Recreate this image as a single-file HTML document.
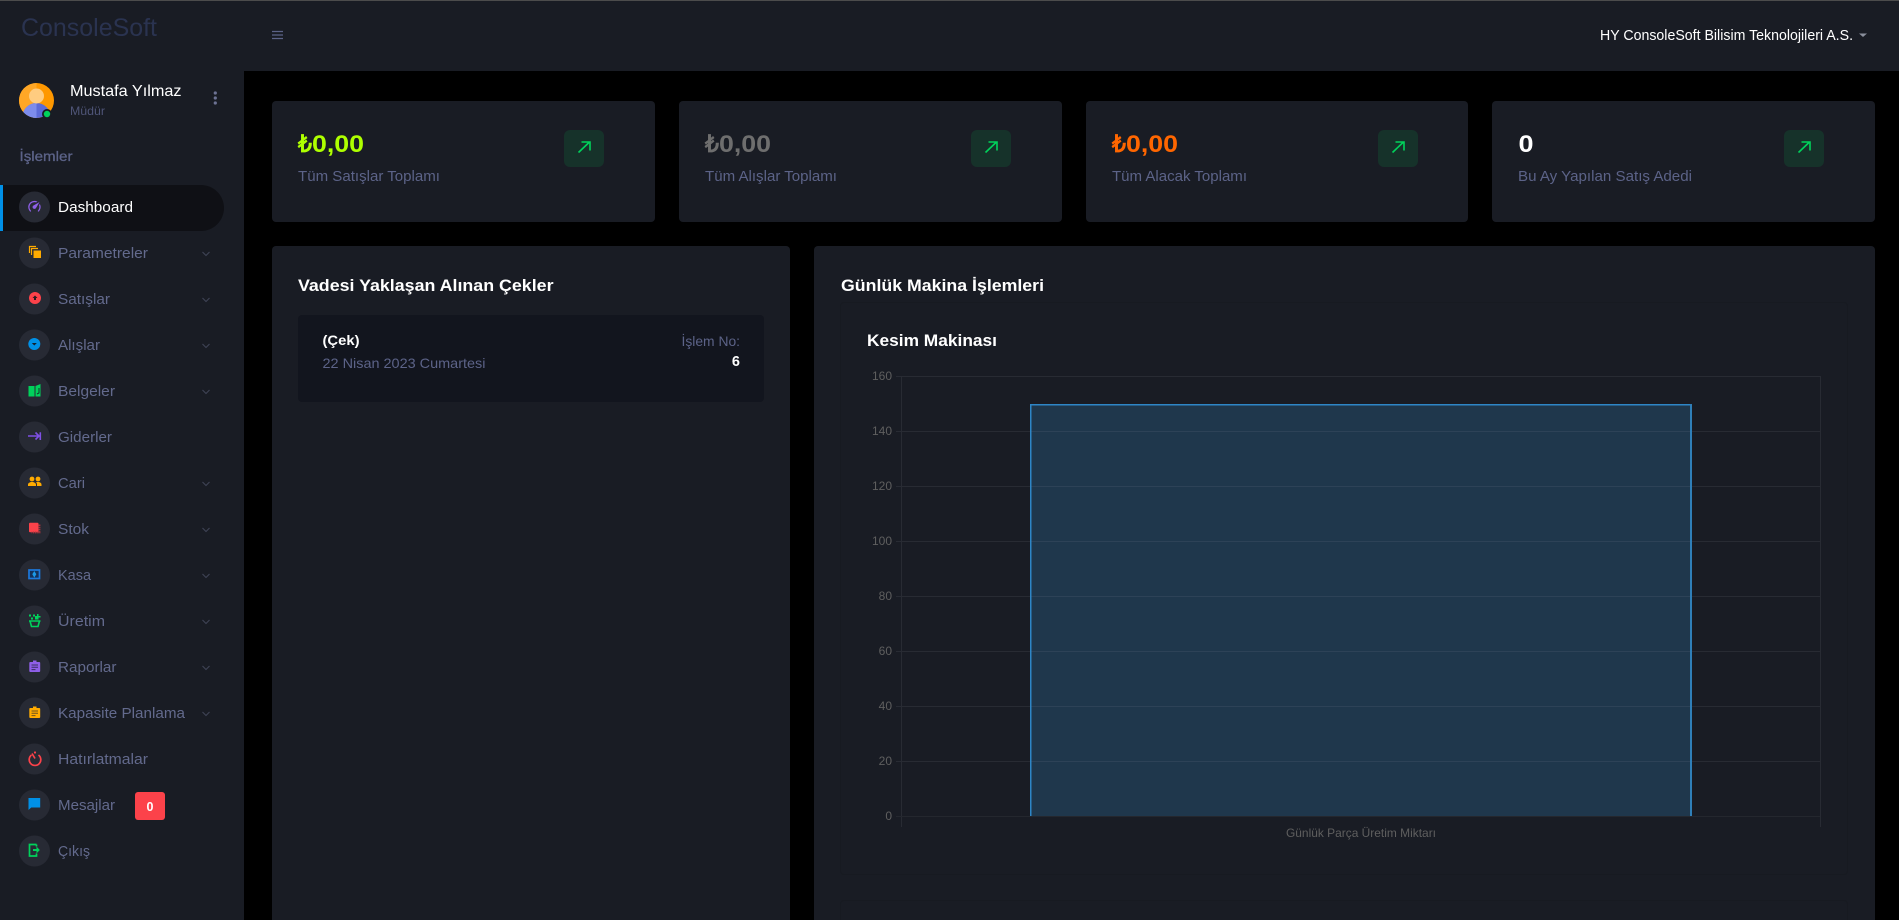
<!DOCTYPE html>
<html lang="tr">
<head>
<meta charset="utf-8">
<title>ConsoleSoft Dashboard</title>
<style>
html,body{margin:0;padding:0;width:1899px;height:920px;overflow:hidden;background:#000}
div{position:absolute;box-sizing:border-box}
#root{left:0;top:0;width:1899px;height:920px;overflow:hidden;background:#000}
.c{background:#191c24;border-radius:4px}
svg{position:absolute;left:0;top:0}
text{font-family:"Liberation Sans",sans-serif}
.m{font-size:15px;fill:#636a8d}
.l{font-size:14.5px;fill:#5c6388}
.t{font-size:16.5px;font-weight:700;fill:#fff}
.v{font-size:24px;font-weight:700}
.a{font-size:12px;fill:#5f5f5f;text-anchor:end}
</style>
</head>
<body>
<div id="root">
<div style="left:0;top:0;width:1899px;height:71px;background:#191c24"></div>
<div style="left:0;top:0;width:244px;height:920px;background:#191c24"></div>
<div style="left:0;top:0;width:1899px;height:1px;background:#4c4c4c"></div>
<div style="left:0;top:185px;width:224px;height:46px;background:#0f1015;border-radius:0 23px 23px 0"></div>
<div style="left:0;top:185px;width:3px;height:46px;background:#0090e7"></div>

<div class="c" style="left:272px;top:101px;width:383px;height:121px"></div>
<div class="c" style="left:679px;top:101px;width:383px;height:121px"></div>
<div class="c" style="left:1086px;top:101px;width:382px;height:121px"></div>
<div class="c" style="left:1492px;top:101px;width:383px;height:121px"></div>
<div class="c" style="left:272px;top:246px;width:518px;height:700px"></div>
<div class="c" style="left:814px;top:246px;width:1061px;height:700px"></div>
<div style="left:298px;top:315px;width:466px;height:87px;background:#12151e;border-radius:4px"></div>
<div style="left:840px;top:302px;width:1008px;height:573px;border:1px solid #171a21;border-radius:4px"></div>
<div style="left:840px;top:900px;width:1008px;height:60px;border:1px solid #171a21;border-radius:4px"></div>

<svg width="1899" height="920" viewBox="0 0 1899 920" xmlns="http://www.w3.org/2000/svg">
  <!-- header -->
  <text x="21" y="36" font-size="25" fill="#2a3350" textLength="136" lengthAdjust="spacingAndGlyphs">ConsoleSoft</text>
  <path d="M272 31.5h11M272 35h11M272 38.500h11" stroke="#5c6388" stroke-width="1.200"/>
  <text x="1600" y="40" font-size="14.500" fill="#fff" textLength="253" lengthAdjust="spacingAndGlyphs">HY ConsoleSoft Bilisim Teknolojileri A.S.</text>
  <path d="M1859 33.500h8l-4 3.500z" fill="#8a8f9c"/>

  <!-- profile -->
  <defs><clipPath id="av"><circle cx="36.500" cy="100.500" r="17.500"/></clipPath></defs>
  <circle cx="36.500" cy="100.500" r="17.500" fill="#ff9800"/>
  <path d="M36.500 83a17.500 17.500 0 0 0 0 35z" fill="#ffa726"/>
  <g clip-path="url(#av)">
    <path d="M22 119c0-10 7-16 14.500-16s14.500 6 14.500 16z" fill="#5c6bd8"/>
    <path d="M22 119c0-10 7-16 14.500-16v16z" fill="#7d8cec"/>
  </g>
  <circle cx="36.500" cy="96" r="7.500" fill="#ffcc80"/>
  <circle cx="47" cy="114" r="5" fill="#191c24"/>
  <circle cx="47" cy="114" r="3.200" fill="#00d25b"/>
  <text x="70" y="96" font-size="16" fill="#fff" textLength="111.500" lengthAdjust="spacingAndGlyphs">Mustafa Yılmaz</text>
  <text x="70" y="115" font-size="12" fill="#4f5578" textLength="35" lengthAdjust="spacingAndGlyphs">Müdür</text>
  <g fill="#6c7293"><circle cx="215.300" cy="93" r="1.600"/><circle cx="215.300" cy="98" r="1.600"/><circle cx="215.300" cy="103" r="1.600"/></g>
  <text x="19.500" y="161" font-size="14" fill="#5c6388" stroke="#5c6388" stroke-width=".3" textLength="53" lengthAdjust="spacingAndGlyphs">İşlemler</text>

  <!-- icon circles -->
  <g fill="#272a34">
    <circle cx="34.500" cy="207" r="15.500"/><circle cx="34.500" cy="253" r="15.500"/><circle cx="34.500" cy="299" r="15.500"/>
    <circle cx="34.500" cy="345" r="15.500"/><circle cx="34.500" cy="391" r="15.500"/><circle cx="34.500" cy="437" r="15.500"/>
    <circle cx="34.500" cy="483" r="15.500"/><circle cx="34.500" cy="529" r="15.500"/><circle cx="34.500" cy="575" r="15.500"/>
    <circle cx="34.500" cy="621" r="15.500"/><circle cx="34.500" cy="667" r="15.500"/><circle cx="34.500" cy="713" r="15.500"/>
    <circle cx="34.500" cy="759" r="15.500"/><circle cx="34.500" cy="805" r="15.500"/><circle cx="34.500" cy="851" r="15.500"/>
  </g>

  <!-- icons -->
  <path transform="translate(27,199) scale(.62)" fill="#8f5fe8" d="M12,16A3,3 0 0,1 9,13C9,11.88 9.61,10.9 10.5,10.39L20.21,4.77L14.68,14.35C14.18,15.33 13.17,16 12,16M12,3C13.81,3 15.5,3.5 16.97,4.32L14.87,5.53C14,5.19 13,5 12,5A8,8 0 0,0 4,13C4,15.21 4.89,17.21 6.34,18.65H6.35C6.74,19.04 6.74,19.67 6.35,20.06C5.96,20.45 5.32,20.45 4.93,20.07V20.07C3.12,18.26 2,15.76 2,13A10,10 0 0,1 12,3M22,13C22,15.76 20.88,18.26 19.07,20.07V20.07C18.68,20.45 18.05,20.45 17.66,20.06C17.27,19.67 17.27,19.04 17.66,18.65V18.65C19.11,17.2 20,15.21 20,13C20,12 19.81,11 19.46,10.1L20.67,8C21.5,9.5 22,11.18 22,13Z"/>
  <g>
    <path d="M29.500 253v-6.500h6.500M31.500 255v-6.500h6.500" fill="none" stroke="#ffab00" stroke-width="1.200"/>
    <rect x="33.500" y="250.500" width="7.500" height="7.500" fill="#ffab00"/>
  </g>
  <circle cx="35" cy="298" r="6" fill="#fc424a"/><path d="M35 295.500l2.500 2.500h-1.500v2h-2v-2h-1.500z" fill="#2a1a20"/>
  <circle cx="34.300" cy="344" r="6" fill="#0090e7"/><path d="M31.800 343h5l-2.500 2.500z" fill="#12202c"/>
  <path d="M28.500 386h6v10.500h-6zM35.500 386l5-2v12.500h-5z" fill="#00d25b"/><path d="M37 394l2-1v-5" fill="none" stroke="#12352a" stroke-width="1"/>
  <path d="M28 436h11M35.500 432.500l3.500 3.500-3.500 3.500M40.300 432.300v7.700" fill="none" stroke="#7f50e4" stroke-width="1.600"/>
  <g fill="#ffab00">
    <circle cx="32" cy="479" r="2.400"/><circle cx="38" cy="479" r="2.400"/>
    <path d="M28 486v-1.500c0-1.500 2-2.500 4-2.500s4 1 4 2.500v1.500zM37 486v-1.500c0-1-.4-1.800-1-2.400.7-.1 1.300-.1 2-.1 2 0 3.500 1 3.500 2.500v1.500z"/>
  </g>
  <rect x="29" y="522.700" width="9.500" height="9.500" rx="1" fill="#fc424a"/><path d="M39.500 524.500v8h-8" fill="none" stroke="#a8343d" stroke-width="1.800" stroke-dasharray="1.500 .7"/>
  <rect x="29" y="570" width="10.500" height="8.500" fill="#14315a" stroke="#1c78dc" stroke-width="1.700"/><path d="M34.300 571l2 3.300-2 3.300-2-3.300z" fill="#1c9ae8"/>
  <g fill="#00d25b">
    <rect x="29" y="614.500" width="2" height="2"/><rect x="33" y="614.500" width="2" height="2"/><rect x="31" y="617.500" width="2" height="2"/><rect x="35" y="617.500" width="2" height="2"/>
    <path d="M37 614h1.500v2h2v1.500h-2v2h-1.500v-2h-2v-1.500h2z"/>
  </g>
  <path d="M29 621h11.500M30 621l1.500 5.500h6.500l1.500-5.500" fill="none" stroke="#00d25b" stroke-width="1.600"/>
  <path d="M30.300 662h2.700v-1.500h3.500v1.500h2.700c.6 0 1 .4 1 1v8c0 .6-.4 1-1 1h-8.900c-.6 0-1-.4-1-1v-8c0-.6.4-1 1-1z" fill="#8f5fe8"/>
  <path d="M31.500 665h6.500M31.500 667.300h6.500M31.500 669.600h4" stroke="#3a2c64" stroke-width="1"/>
  <path d="M30.300 708h2.700v-1.500h3.500v1.500h2.700c.6 0 1 .4 1 1v8c0 .6-.4 1-1 1h-8.900c-.6 0-1-.4-1-1v-8c0-.6.4-1 1-1z" fill="#ffab00"/>
  <path d="M31.500 711h6.500M31.500 713.300h6.500M31.500 715.600h4" stroke="#6a5020" stroke-width="1"/>
  <path d="M31.500 755a5.800 5.800 0 1 0 7 0" fill="none" stroke="#fc424a" stroke-width="1.700"/>
  <path d="M32 753.500l3 5" stroke="#fc424a" stroke-width="1.700"/><circle cx="35" cy="752.500" r="1.100" fill="#fc424a"/>
  <path d="M28.500 798h11.700v9.500h-9l-2.700 2.500z" fill="#0090e7"/>
  <path d="M36.500 844.500h-7v11.500h7v-2.500M36.500 846.500v-2" fill="none" stroke="#00d25b" stroke-width="1.700"/>
  <path d="M33 849h3.500v-2.500l3.300 3.500-3.300 3.500v-2.500h-3.500z" fill="#00d25b"/>

  <!-- menu text -->
  <text x="58" y="212" font-size="15" fill="#fff" textLength="75" lengthAdjust="spacingAndGlyphs">Dashboard</text>
  <text class="m" x="58" y="258" textLength="90" lengthAdjust="spacingAndGlyphs">Parametreler</text>
  <text class="m" x="58" y="304" textLength="52" lengthAdjust="spacingAndGlyphs">Satışlar</text>
  <text class="m" x="58" y="350" textLength="42" lengthAdjust="spacingAndGlyphs">Alışlar</text>
  <text class="m" x="58" y="396" textLength="57" lengthAdjust="spacingAndGlyphs">Belgeler</text>
  <text class="m" x="58" y="442" textLength="54" lengthAdjust="spacingAndGlyphs">Giderler</text>
  <text class="m" x="58" y="488" textLength="27" lengthAdjust="spacingAndGlyphs">Cari</text>
  <text class="m" x="58" y="534" textLength="31" lengthAdjust="spacingAndGlyphs">Stok</text>
  <text class="m" x="58" y="580" textLength="33" lengthAdjust="spacingAndGlyphs">Kasa</text>
  <text class="m" x="58" y="626" textLength="47" lengthAdjust="spacingAndGlyphs">Üretim</text>
  <text class="m" x="58" y="672" textLength="58.500" lengthAdjust="spacingAndGlyphs">Raporlar</text>
  <text class="m" x="58" y="718" textLength="127" lengthAdjust="spacingAndGlyphs">Kapasite Planlama</text>
  <text class="m" x="58" y="764" textLength="90" lengthAdjust="spacingAndGlyphs">Hatırlatmalar</text>
  <text class="m" x="58" y="810" textLength="57" lengthAdjust="spacingAndGlyphs">Mesajlar</text>
  <text class="m" x="58" y="856" textLength="32" lengthAdjust="spacingAndGlyphs">Çıkış</text>

  <!-- chevrons -->
  <g fill="none" stroke="#3f4456" stroke-width="1.100">
    <path d="M202.500 252l3.500 3.500 3.500-3.500"/><path d="M202.500 298l3.500 3.500 3.500-3.500"/><path d="M202.500 344l3.500 3.500 3.500-3.500"/>
    <path d="M202.500 390l3.500 3.500 3.500-3.500"/><path d="M202.500 482l3.500 3.500 3.500-3.500"/><path d="M202.500 528l3.500 3.500 3.500-3.500"/>
    <path d="M202.500 574l3.500 3.500 3.500-3.500"/><path d="M202.500 620l3.500 3.500 3.500-3.500"/><path d="M202.500 666l3.500 3.500 3.500-3.500"/>
    <path d="M202.500 712l3.500 3.500 3.500-3.500"/>
  </g>

  <!-- badge -->
  <rect x="135" y="792" width="30" height="28" rx="3" fill="#fc424a"/>
  <text x="150" y="811" font-size="12.500" font-weight="700" fill="#fff" text-anchor="middle">0</text>

  <!-- stat cards -->
  <text class="v" x="298" y="152" fill="#aeff00" textLength="14" lengthAdjust="spacingAndGlyphs">₺</text>
  <text class="v" x="312" y="152" fill="#aeff00" textLength="52" lengthAdjust="spacingAndGlyphs">0,00</text>
  <text class="l" x="298" y="181" textLength="142" lengthAdjust="spacingAndGlyphs">Tüm Satışlar Toplamı</text>
  <text class="v" x="705" y="152" fill="#6e6e6e" textLength="14" lengthAdjust="spacingAndGlyphs">₺</text>
  <text class="v" x="719" y="152" fill="#6e6e6e" textLength="52" lengthAdjust="spacingAndGlyphs">0,00</text>
  <text class="l" x="705" y="181" textLength="132" lengthAdjust="spacingAndGlyphs">Tüm Alışlar Toplamı</text>
  <text class="v" x="1112" y="152" fill="#ff6600" textLength="14" lengthAdjust="spacingAndGlyphs">₺</text>
  <text class="v" x="1126" y="152" fill="#ff6600" textLength="52" lengthAdjust="spacingAndGlyphs">0,00</text>
  <text class="l" x="1112" y="181" textLength="135" lengthAdjust="spacingAndGlyphs">Tüm Alacak Toplamı</text>
  <text class="v" x="1518.500" y="152" fill="#fff" textLength="15" lengthAdjust="spacingAndGlyphs">0</text>
  <text class="l" x="1518" y="181" textLength="174" lengthAdjust="spacingAndGlyphs">Bu Ay Yapılan Satış Adedi</text>

  <g fill="#16322a">
    <rect x="564" y="130" width="40" height="37" rx="6"/><rect x="971" y="130" width="40" height="37" rx="6"/>
    <rect x="1378" y="130" width="40" height="37" rx="6"/><rect x="1784" y="130" width="40" height="37" rx="6"/>
  </g>
  <g fill="none" stroke="#00d25b" stroke-width="1.600">
    <path d="M578.500 152.500l11-10.500M581.500 142h8.500v8.500"/>
    <path d="M985.500 152.500l11-10.500M988.500 142h8.500v8.500"/>
    <path d="M1392.500 152.500l11-10.500M1395.500 142h8.500v8.500"/>
    <path d="M1798.500 152.500l11-10.500M1801.500 142h8.500v8.500"/>
  </g>

  <!-- left panel -->
  <text class="t" x="298" y="291" textLength="255.500" lengthAdjust="spacingAndGlyphs">Vadesi Yaklaşan Alınan Çekler</text>
  <text x="322.500" y="345" font-size="14" font-weight="700" fill="#fff" textLength="37" lengthAdjust="spacingAndGlyphs">(Çek)</text>
  <text x="322.500" y="368" font-size="14" fill="#5c6388" textLength="163" lengthAdjust="spacingAndGlyphs">22 Nisan 2023 Cumartesi</text>
  <text x="681.500" y="346" font-size="14" fill="#5c6388" textLength="58.500" lengthAdjust="spacingAndGlyphs">İşlem No:</text>
  <text x="740" y="366" font-size="14.500" font-weight="700" fill="#fff" text-anchor="end">6</text>

  <!-- right panel -->
  <text class="t" x="841" y="291" textLength="203" lengthAdjust="spacingAndGlyphs">Günlük Makina İşlemleri</text>
  <text class="t" x="867" y="346" textLength="130" lengthAdjust="spacingAndGlyphs">Kesim Makinası</text>

  <!-- chart -->
  <rect x="1030" y="404" width="662" height="412" fill="#1f374c"/>
  <g stroke="#282b33" stroke-width="1" shape-rendering="crispEdges">
    <path d="M896 376.500H1820M896 431.500H1030M1692 431.500H1820M896 486.500H1030M1692 486.500H1820M896 541.500H1030M1692 541.500H1820M896 596.500H1030M1692 596.500H1820M896 651.500H1030M1692 651.500H1820M896 706.500H1030M1692 706.500H1820M896 761.500H1030M1692 761.500H1820"/>
    <path d="M901.500 376V827M1820.500 376V827"/>
    <path d="M896 816.500H1820" stroke="#24272e"/>
  </g>
  <g stroke="#2d4257" stroke-width="1" shape-rendering="crispEdges">
    <path d="M1031 431.500H1690M1031 486.500H1690M1031 541.500H1690M1031 596.500H1690M1031 651.500H1690M1031 706.500H1690M1031 761.500H1690"/>
  </g>
  <g fill="none" stroke="#2e86c6" shape-rendering="crispEdges">
    <path d="M1030.500 816V404.500H1691" stroke-width="1.500"/>
    <path d="M1691 404V816" stroke-width="2" stroke="#2f7fb8"/>
  </g>
  <text class="a" x="892" y="380">160</text>
  <text class="a" x="892" y="435">140</text>
  <text class="a" x="892" y="490">120</text>
  <text class="a" x="892" y="545">100</text>
  <text class="a" x="892" y="600">80</text>
  <text class="a" x="892" y="655">60</text>
  <text class="a" x="892" y="710">40</text>
  <text class="a" x="892" y="765">20</text>
  <text class="a" x="892" y="820">0</text>
  <text x="1286" y="837" font-size="12" fill="#5f5f5f" textLength="150" lengthAdjust="spacingAndGlyphs">Günlük Parça Üretim Miktarı</text>
</svg>
</div>
</body>
</html>
